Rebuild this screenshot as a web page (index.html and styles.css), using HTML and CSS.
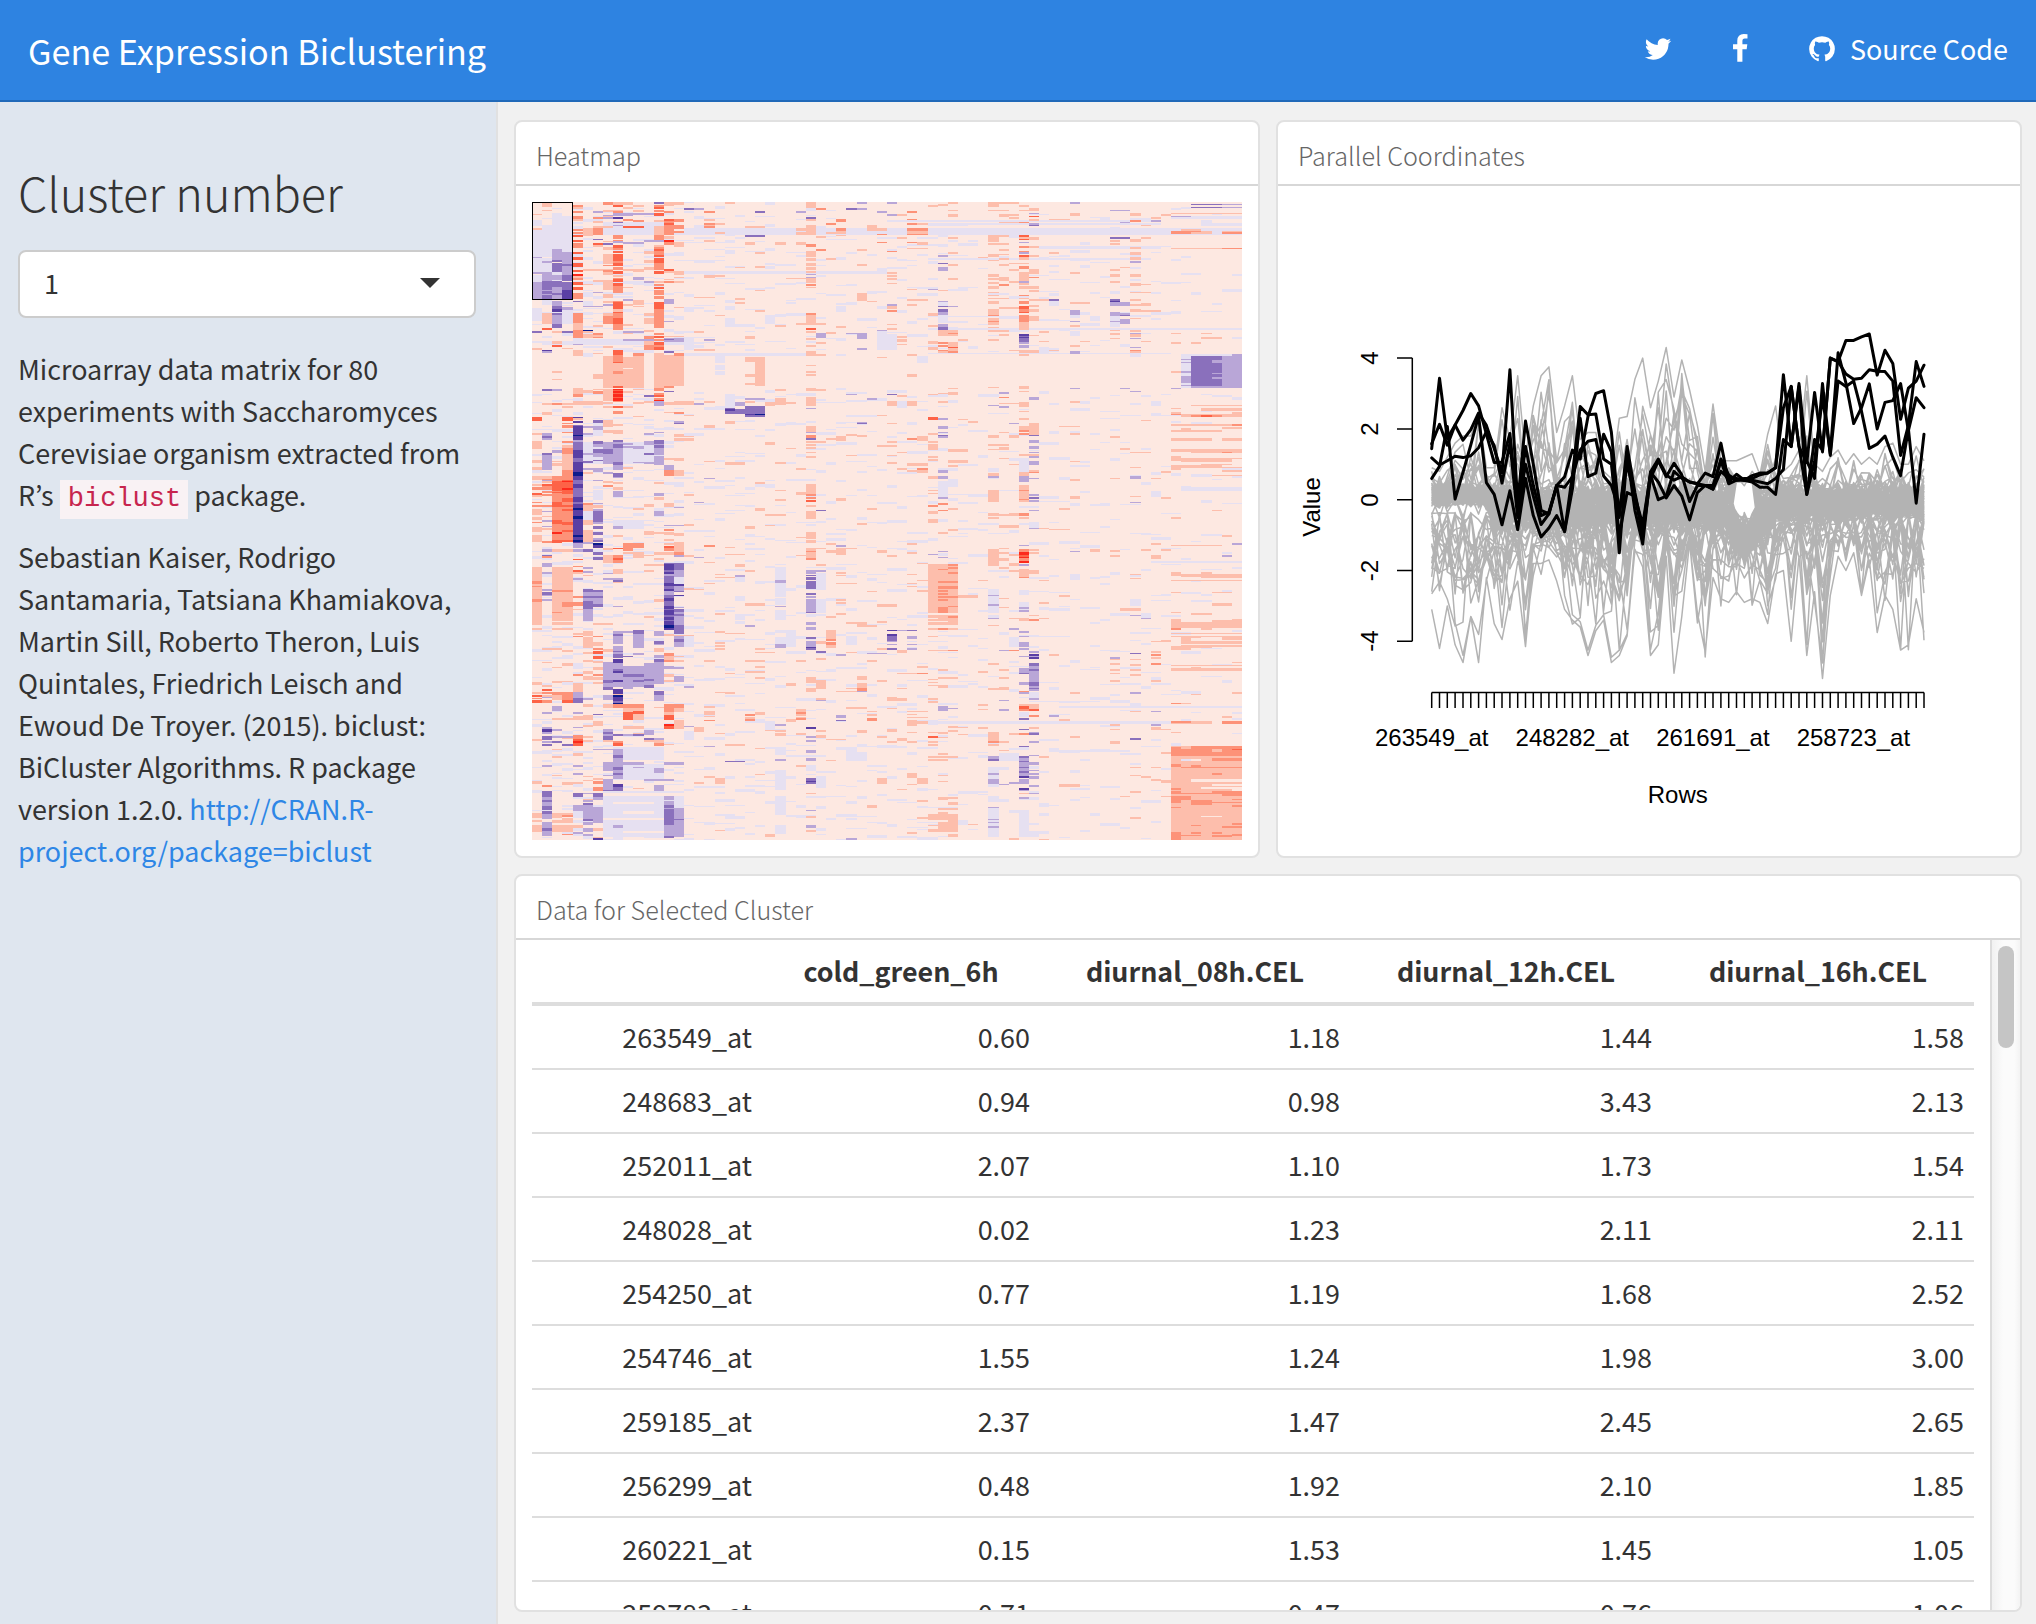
FILE: index.html
```html
<!DOCTYPE html>
<html lang="en">
<head>
<meta charset="utf-8">
<title>Gene Expression Biclustering</title>
<link rel="stylesheet" href="styles.css">
</head>
<body>
<header class="navbar">
  <div class="brand">Gene Expression Biclustering</div>
  <nav class="links">
    <a class="nav-link" aria-label="Twitter"><svg class="icon" viewBox="0 0 1792 1792"><path d="M1684 408q-67 98-162 167 1 14 1 42 0 130-38 259.5t-115.5 248.5-184.5 210.5-258 146-323 54.5q-271 0-496-145 35 4 78 4 225 0 401-138-105-2-188-64.5t-114-159.5q33 5 61 5 43 0 85-11-112-23-185.5-111.5t-73.5-205.5v-4q68 38 146 41-66-44-105-115t-39-154q0-88 44-163 121 149 294.5 238.5t371.5 99.5q-8-38-8-74 0-134 94.5-228.5t228.5-94.5q140 0 236 102 109-21 205-78-37 115-142 178 93-10 186-50z"/></svg></a>
    <a class="nav-link" aria-label="Facebook"><svg class="icon" viewBox="0 0 1792 1792"><path d="M1343 12v264h-157q-86 0-116 36t-30 108v189h293l-39 296h-254v759h-306v-759h-255v-296h255v-218q0-186 104-288.5t277-102.5q147 0 228 12z"/></svg></a>
    <a class="nav-link"><svg class="icon" viewBox="0 0 1792 1792"><path d="M896 128q209 0 385.5 103t279.5 279.5 103 385.5q0 251-146.5 451.5t-378.5 277.5q-27 5-40-7t-13-30q0-3 .5-76.5t.5-134.5q0-97-52-142 57-6 102.5-18t94-39 81-66.5 53-105 20.5-150.5q0-119-79-206 37-91-8-204-28-9-81 11t-92 44l-38 24q-93-26-192-26t-192 26q-16-11-42.5-27t-83.5-38.5-85-13.5q-45 113-8 204-79 87-79 206 0 85 20.5 150t52.5 105 80.5 67 94 39 102.5 18q-39 36-49 103-21 10-45 15t-57 5-65.5-21.5-55.5-62.5q-19-32-48.5-52t-49.5-24l-20-3q-21 0-29 4.5t-5 11.5 9 14 13 12l7 5q22 10 43.5 38t31.5 51l10 23q13 38 44 61.5t67 30 69.5 7 55.5-3.5l23-4q0 38 .5 88.5t.5 54.5q0 18-13 30t-40 7q-232-77-378.5-277.5t-146.5-451.5q0-209 103-385.5t279.5-279.5 385.5-103z"/></svg><span>Source Code</span></a>
  </nav>
</header>
<div class="page">
  <aside class="sidebar">
    <h3 class="sidebar-title">Cluster number</h3>
    <div class="select"><span>1</span><i class="caret"></i></div>
    <p class="text">Microarray data matrix for 80 experiments with Saccharomyces Cerevisiae organism extracted from R’s <code>biclust</code> package.</p>
    <p class="text">Sebastian Kaiser, Rodrigo Santamaria, Tatsiana Khamiakova, Martin Sill, Roberto Theron, Luis Quintales, Friedrich Leisch and Ewoud De Troyer. (2015). biclust: BiCluster Algorithms. R package version 1.2.0. <a class="cite">http://CRAN.R-<br>project.org/package=biclust</a></p>
  </aside>
  <main class="content">
    <div class="row-top">
      <section class="card">
        <div class="card-title">Heatmap</div>
        <div class="heat-body"><svg class="heatmap" id="heatmap" width="710" height="638" viewBox="0 0 710 638"></svg></div>
      </section>
      <section class="card">
        <div class="card-title">Parallel Coordinates</div>
        <svg class="parallel" width="742" height="670" viewBox="1278 186 742 670">
          <g id="profiles"></g>
          <g class="axis" id="axes"></g>
          <g class="labels">
            <text x="1431.7" y="745.5">263549_at</text><text x="1572.3" y="745.5">248282_at</text><text x="1712.9" y="745.5">261691_at</text><text x="1853.4" y="745.5">258723_at</text>
            <text x="1677.8" y="803">Rows</text>
            <text transform="translate(1320 507) rotate(-90)">Value</text>
            <text transform="translate(1377.5 358) rotate(-90)">4</text><text transform="translate(1377.5 429) rotate(-90)">2</text><text transform="translate(1377.5 500) rotate(-90)">0</text><text transform="translate(1377.5 570.5) rotate(-90)">-2</text><text transform="translate(1377.5 641) rotate(-90)">-4</text>
          </g>
        </svg>
      </section>
    </div>
    <section class="card card-data">
      <div class="card-title">Data for Selected Cluster</div>
      <div class="scroll">
        <div class="table-area">
        <table>
          <colgroup><col class="c0"><col class="c1"><col class="c2"><col class="c3"><col class="c4"></colgroup>
          <thead><tr><th></th><th>cold_green_6h</th><th>diurnal_08h.CEL</th><th>diurnal_12h.CEL</th><th>diurnal_16h.CEL</th></tr></thead>
          <tbody>
          <tr><td>263549_at</td><td>0.60</td><td>1.18</td><td>1.44</td><td>1.58</td></tr>
          <tr><td>248683_at</td><td>0.94</td><td>0.98</td><td>3.43</td><td>2.13</td></tr>
          <tr><td>252011_at</td><td>2.07</td><td>1.10</td><td>1.73</td><td>1.54</td></tr>
          <tr><td>248028_at</td><td>0.02</td><td>1.23</td><td>2.11</td><td>2.11</td></tr>
          <tr><td>254250_at</td><td>0.77</td><td>1.19</td><td>1.68</td><td>2.52</td></tr>
          <tr><td>254746_at</td><td>1.55</td><td>1.24</td><td>1.98</td><td>3.00</td></tr>
          <tr><td>259185_at</td><td>2.37</td><td>1.47</td><td>2.45</td><td>2.65</td></tr>
          <tr><td>256299_at</td><td>0.48</td><td>1.92</td><td>2.10</td><td>1.85</td></tr>
          <tr><td>260221_at</td><td>0.15</td><td>1.53</td><td>1.45</td><td>1.05</td></tr>
          <tr><td>259783_at</td><td>-0.71</td><td>0.47</td><td>0.76</td><td>1.06</td></tr>
          </tbody>
        </table>
        </div>
        <div class="track"><div class="thumb"></div></div>
      </div>
    </section>
  </main>
</div>
<script src="charts.js"></script>
</body>
</html>
```
FILE: styles.css
```css
* { box-sizing: border-box; }
body {
  margin: 0;
  width: 2036px;
  height: 1624px;
  overflow: hidden;
  display: flex;
  flex-direction: column;
  background: #f1f1f1;
  color: #333;
  font-family: "Noto Sans CJK JP", "Noto Sans CJK SC", "Noto Sans", sans-serif;
  font-size: 26.95px;
  line-height: 42px;
}
.navbar {
  flex: none;
  height: 102px;
  background: #2e83e1;
  border-bottom: 2px solid #2069b9;
  color: #fff;
  display: flex;
  justify-content: space-between;
  padding: 0 28px;
}
.brand { font-size: 34.15px; line-height: 100px; }
.links { display: flex; gap: 52px; height: 98px; align-items: center; }
.nav-link { display: flex; align-items: center; gap: 13px; }
.icon { width: 30px; height: 30px; fill: #fff; display: block; }
.page { flex: 1; min-height: 0; display: flex; }
.sidebar {
  flex: none;
  width: 498px;
  background: #dfe6ef;
  border-right: 2px solid #e1e1e1;
  padding: 60px 20px 0 18px;
}
.sidebar-title { margin: 0; font-weight: 300; font-size: 46.7px; line-height: 60px; }
.select {
  margin-top: 28px;
  width: 458px;
  height: 68px;
  background: #fff;
  border: 2px solid #ccc;
  border-radius: 8px;
  padding: 0 34px 2px 24px;
  display: flex;
  align-items: center;
  justify-content: space-between;
}
.caret { border: 10px solid transparent; border-top-color: #333; border-bottom: 0; }
.text { margin: 30px 0 0; }
.text + .text { margin-top: 20px; }
code {
  font-family: "Liberation Mono", monospace;
  font-size: 27px;
  line-height: 30px;
  color: #c7254e;
  background: #f9f2f4;
  padding: 4px 7px 5px 8px;
}
.cite { color: #2e86e6; }
.content { flex: 1; min-width: 0; padding: 18px 14px 12px 16px; display: flex; flex-direction: column; gap: 16px; }
.row-top { display: flex; gap: 16px; flex: none; height: 738px; }
.row-top .card { flex: 1; }
.card {
  background: #fff;
  border: 2px solid #e1e1e1;
  border-radius: 8px;
  overflow: hidden;
  display: flex;
  flex-direction: column;
}
.card-title {
  flex: none;
  height: 64px;
  border-bottom: 2px solid #d7d7d7;
  padding: 12px 20px 0;
  font-size: 25.15px;
  font-weight: 300;
  color: #666;
}
.heat-body { padding: 16px; }
.heatmap, .parallel { display: block; }
.axis { stroke: #000; stroke-width: 1.5; fill: none; }
.labels { font: 24px "Liberation Sans", Arial, sans-serif; text-anchor: middle; fill: #000; }
.card-data { flex: 1; min-height: 0; }
.scroll { flex: 1; min-height: 0; display: flex; overflow: hidden; }
.table-area { flex: 1; padding: 0 16px; }
table { width: 1442px; border-collapse: separate; border-spacing: 0; table-layout: fixed; }
.c0 { width: 230px; }
.c1 { width: 278px; }
.c2 { width: 310px; }
.c3 { width: 312px; }
.c4 { width: 312px; }
th { height: 66px; border-bottom: 4px solid #ddd; padding: 10px; font-size: 26.85px; font-weight: 700; text-align: center; }
td { height: 64px; border-top: 2px solid #ddd; padding: 10px; text-align: right; }
tbody tr:first-child td { height: 62px; border-top: 0; }
.track {
  flex: none;
  width: 30px;
  border-left: 2px solid #dcdcdc;
  background: linear-gradient(90deg, #f1f1f1, #fbfbfb 40%, #fbfbfb 80%, #f3f3f3);
  padding: 6px 6px 0;
}
.thumb { width: 16px; height: 102px; border-radius: 8px; background: #c5c5c5; }
```
FILE: charts.js
```js
const NS = 'http://www.w3.org/2000/svg';
function add(parent, name, attrs) {
  const el = document.createElementNS(NS, name);
  for (const k in attrs) el.setAttribute(k, attrs[k]);
  parent.appendChild(el);
}
let seed = 7;
function rnd() {
  seed = (seed * 1103515245 + 12345) % 2147483648;
  return seed / 2147483648;
}

/* Heatmap: 70 conditions wide, 638 pixel rows high.
   Levels: Z neutral, P S R X rising, L M D E N falling. */
const COLORS = { Z: '#fde8e1', P: '#fdbeac', S: '#fd9278', R: '#fd6347', X: '#fc2a1c',
  L: '#e6e0f1', M: '#b9a6d7', D: '#8a70bc', E: '#5a3fa4', N: '#0c1c8c' };
const grid = [];
for (let c = 0; c < 70; c++) grid.push(new Array(638).fill('Z'));
function fill(c0, c1, y0, y1, k) {
  for (let c = c0; c <= c1; c++)
    for (let y = Math.max(0, y0); y < Math.min(638, y1); y++) grid[c][y] = k;
}
for (let c = 0; c < 70; c++) {
  let y = 0;
  while (y < 638) {
    y += 3 + Math.floor(rnd() * (c < 15 ? 16 : c < 42 ? 34 : c > 62 ? 90 : 60));
    const h = 1 + Math.floor(rnd() * 2.6);
    const quiet = y > 152 && y < 186;
    if (!quiet) fill(c, Math.min(69, c + (rnd() < .35 ? 1 : 0)), y, y + h, rnd() < .86 ? 'L' : 'P');
    y += h;
  }
}
/* Each tile: origin offset, then "col[-col]:y0,y1K ..." with y in thirds of a pixel. */
const tiles = [
[-92, `
15-69:354,375L
7-12:336,375L
5-12:996,1062L
7-12:1014,1056L
15-26:729,738L
15-34:484,491L
4-14:687,705L
4-10:513,522L
0:330,348L 360,440L 441,444M 444,486L 486,492M 495,515L 515,567M 604,633L 663,669D 714,720P 921,933R 969,975P 993,1017P 1050,1060P 1072,1080P 1098,1110P
1:279,291P 300,303P 345,440L 444,486L 453,459M 486,516M 513,567D 540,543M 552,555M 570,585L 609,642P 654,660R 720,723E 723,729M 837,843D 879,885P 969,978M 978,984D 984,990M 1029,1035D 1035,1080M 1098,1113P 1107,1113S
2:309,321L 321,417L 417,450M 450,456D 459,486D 486,495L 495,510M 513,530D 530,567M 549,555D 573,588M 588,597D 597,606E 609,615D 615,642M 642,654D 663,669P 693,702P 705,711R 783,789P 807,810P 837,843M 879,885S 1020,1029M 1059,1068P 1098,1113S
3:318,426L 426,462M 462,468D 468,495M 495,513D 516,531D 531,540D 540,567E 576,582L 591,600M 600,640L 663,669D 693,705L 879,885P 888,894P 921,933R 939,942S 945,954S 966,969S 993,999S 1005,1080P 1014,1032S 1080,1113S
4:285,291S 291,297P 303,309S 318,327S 327,333P 357,363S 366,372S 375,381R 390,396R 400,414S 426,432R 441,450R 459,471R 480,486R 492,498X 498,504P 504,510S 516,526R 530,540R 549,567S 573,576D 609,640S 640,660P 660,684S 684,696L 702,705M 720,738P 834,852P 852,861S 864,873L 873,885P 921,924E 933,940E 945,948D 948,975E 975,978N 978,990E 990,996M 996,1020D 1020,1044E 1044,1056D 1056,1086E 1086,1098N 1098,1113E
5:291,300L 354,378P 384,390L 420,426L 477,483P 546,560L 573,588L 588,591M 660,663N 663,669P 672,684P 693,705L 732,741L 873,885P 948,954M 969,975M 1029,1035M 1053,1060D 1074,1080M
6:303,309M 321,327S 333,339P 354,375S 387,390D 399,405R 405,411P 477,483P 510,516P 516,525L 546,549M 588,591M 645,651P 669,675S 675,681P 681,684S 708,714L 729,732P 792,807P 843,852S 873,885P 930,939D 948,960M 960,975L 993,1002D 1002,1011M 1017,1030D 1030,1040M 1050,1053D 1074,1086M
7:276,285S 300,306P 315,318M 321,327M 348,354P 399,405D 411,420P 432,462P 465,468S 477,495P 480,486S 510,540P 552,564P 573,579P 582,588M 609,618P 618,642S 708,714P 738,834P 837,873P 876,882P 888,894P 930,951P 960,969P 996,1017M 1017,1032D 1032,1062M 1086,1092M
8:276,285P 285,291R 300,303P 303,309S 309,318M 321,327E 333,336P 336,339D 345,348M 375,387S 390,393S 393,399M 405,414R 414,420S 423,429R 432,453R 453,459S 459,468R 471,480S 483,492R 495,500P 504,507S 507,516R 519,528R 528,549S 573,576S 576,597R 597,606P 606,609R 609,624S 624,642R 642,660S 720,735R 735,756S 756,759R 759,792P 783,792S 792,828P 828,834R 837,873X 840,843R 849,852R 861,864R 873,876S 888,894R 903,912S 942,948P 960,969P 990,996D 996,1002M 1002,1014D 1014,1056M 1056,1065D 1065,1080M 1089,1101D 1101,1104M
9:276,285P 291,297P 309,318M 327,333S 348,354R 396,402M 465,471L 477,483P 492,498L 513,519L 567,573M 582,588P 642,648P 663,669M 687,693M 741,774P 777,834P 843,849P 888,894P 999,1005M 1008,1014M
10:285,291P 300,306P 309,315M 330,336S 348,354R 396,402M 402,411L 477,486P 501,510M 513,519L 570,585P 588,591P 663,669M 687,693M 729,738S 738,834P 837,840P 876,882P 1008,1017M 1056,1060M
11:309,315M 390,396M 423,432P 450,459P 471,480P 513,519M 609,618P 624,642P 660,665P 678,687S 687,693M 693,705P 705,720S 855,861D 873,880P 969,975M 993,1005M 1029,1035D 1056,1062M
12:276,282D 285,291S 291,297R 300,306S 309,318R 330,336P 348,375P 375,390S 390,396M 405,411P 411,417S 417,423R 423,435S 435,441R 444,459R 459,480S 483,492R 513,519P 522,528S 531,537R 540,555S 558,567S 576,597R 597,606S 606,654S 669,675S 678,684R 687,693S 696,705R 705,711S 711,720R 729,834P 834,843S 849,855S 855,861R 864,870S 870,873X 873,888M 966,969M 990,1014D 1002,1005M 1014,1035M 1038,1065M
13:276,288P 303,309S 327,333R 333,339S 339,345R 345,375S 378,387P 390,396X 396,405S 477,483R 513,519S 567,582M 633,636M 684,696M 687,690D 723,729D 735,756P 756,783P 780,828P 828,834S 843,846D 876,885P 906,910P 1065,1080M 1080,1098S
14:276,285P 327,336S 345,357S 363,369S 396,411P 483,495P 501,504P 513,519P 684,696M 729,738S 738,828P 879,885P 906,912S 933,939M 939,942D 984,993P 1080,1098P
15:294,300D 276,280L 552,558L 600,606L 663,669L 687,720L 879,885P 984,993P
16:294,300M 879,885M 591,597L 696,702L
17:303,309S 327,333P 339,345S 345,351P 348,354S 390,396P 495,504P 687,693M 873,879P 1104,1107M
18:339,345P 366,372P 495,500P 732,759L 765,780L 783,795L
19:276,282P 390,400L 420,432L 570,580L 588,600L 624,650L 852,894L 894,897D 897,903E 903,912D 933,942P
20:876,888M 897,912D 576,582P
21:348,354P 375,381D 396,405P 678,687P 741,756P 792,800P 819,825P 864,870M 873,879P 888,912D 912,915E 915,920D
22:303,309D 348,354P 375,381D 426,432P 600,606P 741,828P 864,870M 888,912D 912,915N 915,920D
23:276,285L 342,350L 468,477L 615,642L 876,888P
24:396,405P 645,651P 837,843P 864,885P
25:576,582L 570,573L 876,882P
26:303,309M 354,363P 366,375P 396,405P 1074,1080P
27:276,294P 294,303L 321,327D 327,333P 345,375P 402,411S 423,441P 444,453P 459,468P 471,480P 483,490P 492,495M 501,504M 504,520P 522,528S 531,534P 609,615S 615,645P 654,660R 663,669P 684,690P 705,711P 723,738P 765,768P 783,789P 792,798P 834,843P 861,888P 894,897M 948,966P 966,969M 975,984S 984,990D 993,999P 1002,1008P 1011,1017P 1026,1029P 1038,1044P
28:294,300S 378,384P 417,423S 639,645P 669,684M 732,738P 837,843P 993,999P
29:339,345S 366,372P 984,990P
30:327,336S 354,363S 363,372P 588,606L 978,993P 687,693L
31:294,300D 669,672M 852,855M 972,978P
32:276,282M 294,300M 417,423P 549,564P 669,687M 714,720M 939,942D 936,939M
33:345,363P 573,576P 864,870M
34:303,309M 354,363P 660,663M 741,744P`],
[278, `
8-10:120,146L
7-14:933,1071L
8-12:801,840L
8-12:852,900L
4-6:975,1030L
4-12:1014,1020Z
7-14:939,948Z
9-11:993,1002Z
9-12:1053,1059Z
8-11:966,972Z
0:12,18P 21,30S 39,45R 45,50P 66,69S 75,81S 87,105P 111,120P 126,129S 141,156P 165,186P 261,303P 303,312S 312,318P 318,321S 321,357P 357,366S 366,435P 444,450P 606,609P 636,642P 645,651R 654,657S 660,669R 903,911P 999,1014P 1020,1026P 1035,1056P
1:0,3M 3,9P 12,18R 18,30S 33,39S 42,48S 75,81S 93,96M 120,126M 138,141M 183,189S 207,216M 225,228D 228,234S 249,261M 276,282M 327,333M 336,345D 345,348M 357,363M 504,510P 546,549P 615,621P 627,633R 636,642S 645,651P 651,654M 660,669S 696,702M 741,747M 747,756E 756,762M 768,780D 783,789M 792,798D 855,861M 915,921S 933,951D 951,960M 960,966D 966,978M 978,990D 993,1002D 1002,1017M 1026,1044M 1044,1053D 1053,1068M
2:0,3S 3,33R 33,66S 36,39R 66,81R 81,120S 120,132R 132,156S 156,162X 162,180S 180,189R 207,216P 261,330P 330,336S 336,396P 396,399S 399,422P 426,435P 444,450P 504,510P 636,645S 645,660P 678,693M 747,753M 768,774M 783,789D 807,810P 828,834P 885,888P 933,998Z 999,1014P 1020,1029P 1035,1056P
3:0,3R 3,6X 6,24R 24,30X 30,42R 42,54S 54,66R 66,75S 75,81R 81,87S 87,93R 93,126S 126,135R 135,150S 150,156R 156,180S 180,186R 207,216P 261,330P 330,336S 336,366P 366,381S 381,422P 426,435P 444,450P 510,516P 636,660S 660,669R 768,774M 792,798D 999,1005P 1005,1011S 1014,1029P 1035,1056P 1062,1065S
4:0,12D 12,24E 24,51D 51,66E 66,72D 72,84E 84,90N 90,108E 108,117N 117,165E 165,171N 171,180E 180,186N 186,189E 189,204M 207,216M 237,240R 258,261S 270,276R 276,282P 294,300M 348,354S 366,378S 468,471S 549,567L 582,588S 609,636P 636,654M 654,669D 696,702M 708,714P 741,744M 765,777S 777,783R 783,789X 789,798R 819,828P 855,861M 879,885M 939,951D 975,993M 1056,1062M
5:69,75S 75,80P 81,93P 93,120L 120,135P 150,165P 165,186P 186,192M 207,216D 261,267M 273,279M 327,336D 336,348M 348,354D 354,363M 363,387D 387,423M 453,468P 471,504P 516,522P 540,546P 573,582P 588,600P 654,660M 705,711P 735,741P 768,774P 780,786P 888,891P 939,942M 960,966M 969,975D 975,1017M 1017,1023D 1026,1035M 1044,1056M 1062,1068M
6:0,3M 30,60L 69,72M 87,93M 93,126D 126,132M 138,147D 156,165D 174,180M 180,186D 189,195N 195,204E 216,225D 231,240D 330,336D 336,348M 348,354D 354,372M 372,381D 468,471S 486,498P 504,510S 513,522R 528,537R 543,549P 582,588S 591,600P 606,612P 702,705D 723,738P 807,810M 894,900P 903,912S 921,933S 939,951D 951,960M 981,1029M 1074,1080E
7:15,21S 204,210P 225,249P 279,282M 294,300M 546,600M 600,609D 609,621M 621,630D 645,660M 672,684P 747,756M 756,762D 762,768M 768,780D 780,786P 807,810M 846,873M 885,888M 897,933M 930,933D
8:6,12P 21,30P 33,51M 138,147M 165,171P 204,207R 225,234S 234,240R 240,249S 267,282P 294,300M 300,306D 378,381M 453,462M 462,468D 468,492M 498,512M 513,534D 516,522M 537,549E 549,567M 567,573D 573,579E 579,600M 600,606E 606,621M 627,642E 645,651N 651,663E 663,669D 669,672N 672,684S 762,768D 783,789S 789,798R 807,825M 825,834D 834,861M 861,870D 870,897M 879,885D 912,921E 921,933D 1035,1044M
9:189,213S 216,222P 453,460M 528,531D 558,582M 582,591D 591,627M 672,684S 684,696P 696,720R 738,747P 762,768M 846,855M
10:84,90P 189,204S 216,234P 450,462D 462,504M 519,525M 558,582M 582,591D 591,621M 600,606D 672,684S 684,693P 693,702R 702,720P 738,747P 759,765P 762,768D 846,855M 861,864M
11:75,81P 153,165P 225,228P 252,258P 270,276P 408,414P 549,597M 597,603D 603,615M 615,624D 750,765M 773,780D 897,903M
12:39,48M 93,108M 156,162P 216,225P 234,240P 252,258P 357,366P 453,468M 483,492D 492,495M 504,516P 525,534M 537,546D 546,612M 633,645D 645,663M 774,780M 789,798S 864,879M 897,903M 915,933M
13:69,81P 135,138M 147,153S 156,165P 177,183P 189,195P 198,204R 204,213S 216,225P 249,252D 252,270E 270,276D 276,282E 282,288M 288,309D 309,318E 318,327D 327,333E 333,345M 345,354D 354,363E 363,378D 378,387E 387,390D 390,405E 405,411D 411,420E 420,423D 423,435E 435,444N 444,450E 462,468P 519,528S 528,540P 540,546S 558,567M 582,590P 600,606P 672,684S 684,696S 696,705P 705,720R 732,738X 738,747R 846,855M 897,903M 948,960M 963,975M 975,981D 981,1035D 984,987M 1035,1070M 1068,1074D
14:81,84M 135,138M 186,216P 216,225S 225,231M 249,270D 270,291M 291,312L 312,318E 318,333M 333,336D 345,348E 381,384M 387,396D 396,402M 402,408D 408,435M 435,450D 450,462D 468,477M 477,486D 486,501M 528,531P 540,546P 561,567M 588,606M 672,684S 684,696P 720,747P 846,855M 984,1017M 1017,1020D 1020,1071M
15:42,48P 225,231P 468,500L 618,624M 738,741M 753,780L
16:66,69M 231,234M 741,756P 906,912P
17:195,201S 309,312P 540,546P 678,684P 693,705P 708,711P 720,723S 798,801M 888,894P
18:282,285P 399,405P 453,459P 486,492P 495,501P 504,510P 894,911P
19:578,582P 636,642P 843,846D 1044,1053L
20:285,303L 285,291M 843,846D 348,363L 405,420L
21:435,441M 540,546P 573,579P 702,708S 711,717P 717,723S
22:6,12P 84,93P 504,510P 540,546P 558,564P 573,579P 591,597P 696,705P
23:135,138P 723,750L
24:261,350L 300,309M 354,375L 378,381M 390,420L 471,492L 492,504M 732,738M 750,756P 759,768P 801,825L 837,843M 870,930L 948,1005L 1035,1062L
25:450,500L 513,522L
26:540,546P 687,696P 696,702S 702,708P 711,714P 714,720S 759,765P
27:12,42P 42,48S 51,57S 60,66R 75,81P 93,117P 156,177P 180,189P 204,213P 213,216S 216,234P 234,240S 270,282M 285,288D 291,300D 303,327D 339,345D 348,354M 357,396M 396,399D 402,411L 426,435M 441,450M 471,477D 483,501M 501,504E 504,510D 591,609P 624,636P 741,747E 768,774M 780,786M 810,819M 834,843M 855,873L 894,903D 903,906E 906,912D 939,942P 990,993M 1035,1044M
28:90,93D 270,276M 282,326L 357,399L 513,519D 534,540P 600,627P 654,660P 660,663M 750,756P 765,774P 888,923L
29:189,195P 450,477P 477,483S 486,495S 495,504P
30:195,201M 204,210P 216,225P 276,282P 357,363P 366,372P 399,405P 522,528M 705,714M 720,723D
31:468,495L 624,627P 801,843L 1074,1080M
32:588,600P 609,624P 624,633S 633,636M 750,759P 816,843L
33:84,90P 540,546P 693,697P 702,708P 714,723S 519,522M
34:504,510P 519,522M 600,606P 768,774P 894,911P`],
[-22, `
35-61:120,126L
39-61:129,135L
50-60:198,207L
39-60:234,240L
39-48:408,411L
39-69:444,450L
39-62:519,522L
64-69:921,933L
63-69:108,116L
66-69:129,138L
34:93,99M 144,153P 162,165S 186,189S 450,453M 459,510L
35:66,72M 102,108M 213,216S 276,282P 285,291P 294,300P 309,312P 372,378M 378,387P 390,396S 432,435P 444,450P 462,510L 642,645D 663,678P 729,732P 783,789P 825,828P 846,852P
36:102,108P 171,177P 468,474P 477,486P 492,495P 645,651P 663,684L 816,819P 864,870P
37:93,99S 117,120S 129,135S 144,153S 153,162P 162,165S 186,189S 204,207P 327,330P 357,363P 372,378P 522,528P 582,591P 663,678P 774,780S 870,876P
38:129,135P 144,153S 153,162P 162,165S 186,195P 204,207P 357,363P 528,548L 768,783P 864,870S 870,879P
39:75,81P 327,330M 435,441P 483,492P 501,510P 642,645P 711,720R 759,765P 783,789P 792,810P 828,834P 837,843P 888,897P 930,933P 939,942P 975,981S 993,1002P 1017,1029P
40:72,78P 225,231M 249,252D 261,273M 363,366M 366,378L 378,381D 387,396D 396,405M 405,430L 432,441M 441,450D 450,468P 486,492S 495,501S 510,513S 513,519P 639,642P 663,669P 714,720M 738,747M 756,759M 765,768D 768,774M 870,879M 888,897M 903,950L 951,957M 969,975S 990,993S 1056,1062P
41:66,72P 90,93P 102,111P 171,177P 216,222P 252,258P 294,300P 378,381M 450,468P 459,462S 486,513P 501,504R 513,519S 624,627P 636,645P 855,861P 903,920L 984,990P 1047,1053P
42:477,483P
43:723,729P
45:66,81P 90,93P 165,186P 189,195P 222,231P 240,243P 282,291P 294,300P 306,312P 318,327P 336,339P 345,348P 354,357P 363,372P 387,405P 405,408S 414,423P 423,426S 426,435P 441,444P 450,456P 477,483P 621,624P 675,678M 765,774P 792,798P 807,810P 864,876L 879,888P 888,894M 930,966P 999,1008P 1011,1017P 1107,1113P 1116,1140P
46:66,72P 90,93P 165,171P 189,195P 207,213P 222,225P 234,240P 252,258P 291,303P 312,318S 354,357P 381,387P 450,456P 462,468P 636,642M 651,654S 678,684M 756,759P 792,798P 801,810P 834,837P 1002,1008P 1116,1122P
47:66,72P 102,108P 111,117P 249,252P 267,273P 303,309P 381,387P 510,513P 729,732M 765,774P 852,855P
48:75,81P 90,93P 126,129S 165,171R 177,180R 186,189M 198,204S 213,216S 216,222M 225,231R 231,240P 249,252P 258,267S 276,303P 303,309M 309,315P 321,327P 345,348S 354,357P 363,372S 378,387R 387,396S 396,399R 405,426S 426,450P 462,477E 468,470D 474,486D 486,492M 495,504M 510,519P 522,528P 618,627P 633,636P 666,681P 693,696P 714,720P 738,756P 750,756S 759,765S 834,876L 876,888P 888,906M 915,966P 930,933S 957,960S 999,1008S 1011,1017P 1095,1098M 1107,1113S 1116,1134X 1125,1128S 1134,1140S
49:84,93P 99,102M 108,111R 117,123P 129,135M 135,138D 171,177P 198,204P 225,231P 267,282P 291,294S 321,327P 330,336P 357,363P 375,381P 387,396P 408,423P 465,468P 510,519P 651,660M 729,765P 765,768D 780,789M 798,807M 816,819M 828,834M 843,855M 870,876P 876,879S 894,897M 942,948M 951,957D 960,966M 990,993M 1026,1044L 1044,1047M
50:357,363P 453,459P 483,486P 501,522L
51:216,222P 357,363D 363,378L 510,513P
52:984,990P
53:66,72M 99,108P 276,282P 366,372P 390,405M 423,426M 435,441P 453,468L 495,501P 513,522M 624,627M 663,669P 738,741P 759,765P 843,846P 897,903P 948,957P 1113,1116M
54:396,405L 366,372P 483,486P
55:408,423L
57:90,93M 171,177D 180,186P 189,195P 267,273P 282,291P 303,309P 357,363D 363,366E 366,378M 396,408M 408,441L 423,426M 450,453P 459,465P 474,477P 768,774P 894,897P
58:90,93M 126,129M 171,177D 366,378M 399,405M 405,408D 417,432M 624,627M
59:99,108P 120,126S 177,186P 201,207P 216,225P 231,240P 243,249M 282,291P 309,318P 336,339P 357,363P 372,378P 387,396P 414,417P 459,462M 462,471P 474,477M 501,504M 510,513S 513,519P 633,636M 861,864P 888,897M 948,951P 966,969M
60:135,138P 171,177P 336,339P 372,378P 390,396P 483,486P 720,723P 1107,1113P
61:111,117P 120,126M 390,396P 663,678L 894,897P 939,950L 1089,1095P
62:102,108P 951,957P 1107,1113P
63-69:99,102P
63-67:204,207P
68-69:204,207S
65-67:72,75D 81,84D
68-69:72,75M 81,84M
63-64:108,111M
64-65:147,153P
63-65:153,162S
66:153,162P
68-69:153,156P 156,162S
65-66:156,162P
63:459,462P 486,492P 573,579P 624,627M 684,687P 696,702P 702,705S 828,834P 864,870P 1011,1017P
65:486,492P
66:459,462P
64-69:522,528L
64:528,624L 537,540M 546,549M 573,579M 588,609M 615,618M
65-67:528,618D
67:540,549M 579,582M 591,597M
68-69:528,624M
65-67:618,624M
69:522,528M
65-69:675,678P
66-69:684,693P
64-69:702,711P
65:705,711S
66:705,711R
67:705,711S
69:696,705P
63-68:732,738P
69:732,738S 1089,1095M
63-67:750,756P 855,864P 1095,1098P
63-66:774,783P
68-69:774,783P 861,864P 870,876P
63-69:807,816P
65-69:816,819P
68:816,819S 1065,1071P 1125,1131M
63:834,843P
64-68:834,846P
69:834,837P
66-68:852,855P
67-69:885,888P`],
[338, `
61-69:63,68L
52-69:498,504L
39-62:543,551L
51-58:630,636L
35:45,51P 270,273E 282,288E 288,303D 303,306M 312,315M 324,330D 471,474P 504,507P 567,576P 603,609P
36:270,273M 399,402P 444,447P
37:9,15P 36,42P 102,105P 129,132P 138,141P 270,273D 288,297M 303,306L 312,315M 324,330M 399,402P 513,516P 522,525P 531,534P 540,558P 603,609P 699,714P 876,882P
38:69,72P 120,123P 150,156P 378,384P 399,402S 513,516P 531,534P 543,552P 714,732P 780,786P 831,837P
39:42,45M 72,219P 225,234P 237,243P 246,255P 264,270P 288,291P 330,333P 417,420P 426,430P 435,438P 474,480P 483,489P 576,579P 588,594R 603,609P 612,618P 657,663P 822,840P 855,858P 867,876P
40:33,36M 51,54M 72,219P 87,90S 123,129S 138,147S 150,156S 159,165S 168,174S 177,183S 201,219S 225,243P 246,255P 264,270S 330,333P 387,393P 411,417P 435,444P 498,513M 576,582P 591,594P 639,645P 648,654P 657,663P 705,708P 723,726P 771,780P 804,810P 822,840P 846,876P
41:72,78S 78,219P 81,87S 96,102S 123,129S 138,147S 168,174S 198,201S 225,228P 228,234S 234,255P 264,270P 330,333S 411,417P 504,507M 570,576P 648,654P 771,777P 786,795P 804,810P 822,876P 882,891P
42:840,855L
43:168,174P
44:120,123P 393,399P 492,498P 561,567P
45:27,78P 147,234L 165,168M 192,198M 219,225Z 234,237M 369,375P 444,447P 576,603P 603,609S 612,618P 648,657M 657,663D 684,740L 699,705M 717,732M 771,785L 804,892L 801,804M 837,840M 846,849M 858,864M
46:24,27P 54,63P 81,87P 174,177P 330,333M 387,393P 411,417P 444,447P 480,483M 507,513M 603,609P 639,663L 732,735M
47:42,48P 69,78P 90,96P 234,237P 264,270M 291,320L 330,333S 579,585P 639,663L 726,732M 894,900P
48:15,18M 27,36S 36,45X 45,54R 51,54X 54,63S 63,69X 72,78M 87,111P 111,114S 150,165L 186,216L 201,207M 210,216M 234,243P 273,279M 288,291M 306,320M 324,330M 348,351M 384,399M 399,402D 426,435M 453,456S 456,462M 492,498P 498,507R 507,513S 516,530L 534,540D 567,570D 579,585S 618,621D 648,654D 654,663M 663,666D 666,708M 681,684D 693,699D 708,714E 717,732M 744,750E 750,753M 759,762P 771,777M 810,876L 876,891L
49:27,33P 90,102P 225,228P 237,243S 333,339M 342,348E 348,351M 351,357E 369,378D 378,411M 387,393D 411,426M 426,438D 438,453M 444,447D 456,474L 474,480M 492,507P 507,513R 525,531S 561,567P 576,579M 579,585D 603,609M 645,648M 666,675M 690,693M 699,705M 708,717M 735,741M 759,762M
50:120,123P 186,192P 234,237P 648,654P 789,801L
51:342,348P 525,531M
53:33,36M 588,594P 102,120L
57:30,36P 45,51P 351,357M 357,360P 369,375P 387,393P 399,402P 420,426P 552,558P 567,570P
59:102,105P 114,117P 177,198L 225,228M 339,342D 357,360P 372,378P 387,393P 402,408P 456,462M 513,516P 594,600D 681,684P 705,708P 753,759P 831,837P
60:27,33P 234,237M 219,234L 708,714P
61:9,15P 45,51P 333,339P 342,348S 351,357P 369,375S 420,426P 513,516M 552,558M 561,570P 681,684P 717,723P
62:27,33P 567,570P 768,771P
63:96,102P 102,108P 156,159P 216,219P
64-69:102,111P
66-69:105,114P
66:96,102P
63-69:120,123P
67-68:156,159P
65-66:219,225P
63-69:237,264P
64-68:237,240Z
64-66:240,247Z
63:264,270S
66:264,270P
63-69:279,282P 288,291P
64:291,303P
65:291,294P
68-69:291,300P
64-69:303,312P
65-69:312,315Z
64-69:315,321P
63-66:321,324P
63-64:318,330P
63-69:375,378P
63:384,393P 489,492S
64-69:384,393P
69:456,462P 366,369P
65:462,465P
64:489,492P
63-64:543,549S
65-66:543,549P
68-69:543,552S
63-66:549,552P
63:576,579P 609,618L
63-69:618,900P
65-69:618,627S
63:621,627S 672,681S 744,750S 753,762S 768,789S 801,804S 876,900S
63-69:627,648S
67:627,636P 699,705S 876,882S
69:627,630R 795,801S 849,855S 882,888S 777,780S
67-69:654,663S
63-69:648,654P
64:657,663L
65:657,663Z 675,681S 855,858S
64-69:681,684S
65-69:717,726Z
67-69:732,738Z
66-68:741,747Z
69:741,753Z
64-69:759,762S
67-69:753,759S
68-69:762,768S 858,864S
64:768,780S
65-66:780,795S
67-69:786,789S
66-67:828,831Z
64-65:885,888S
65:876,882S
67-68:885,891S`]];
for (const [origin, body] of tiles) {
  for (const line of body.trim().split('\n')) {
    const [cols, runs] = line.split(':');
    const [a, b] = cols.split('-').map(Number);
    for (const run of runs.trim().split(' ')) {
      const m = run.match(/^(\d+),(\d+)([A-Z])$/);
      if (m) fill(a, b === undefined ? a : b, Math.round(origin + m[1] / 3), Math.round(origin + m[2] / 3), m[3]);
    }
  }
}
const paths = {};
for (let c = 0; c < 70; c++) {
  const x0 = Math.round(c * 710 / 70), x1 = Math.round((c + 1) * 710 / 70);
  let y = 0;
  while (y < 638) {
    let e = y;
    while (e < 638 && grid[c][e] === grid[c][y]) e++;
    const k = grid[c][y];
    paths[k] = (paths[k] || '') + `M${x0} ${y}H${x1}V${e}H${x0}z`;
    y = e;
  }
}
const heat = document.getElementById('heatmap');
for (const k in paths) add(heat, 'path', { d: paths[k], fill: COLORS[k], 'shape-rendering': 'crispEdges' });
add(heat, 'rect', { x: .5, y: .5, width: 40, height: 97, fill: 'none', stroke: '#000' });

/* Parallel coordinates */
const X = i => 1431.7 + i * 7.815, Y = v => 499.7 - v * 35.4;
const hi = [.9,.8,1.2,1.6,1.8,1.8,2.4,.9,.9,2.6,1.7,3.5,1.2,2.65,3.5,3.75,1.9,2.65,3.5,1.7,1.9,1.9,.8,.6,2.3,2.35,3.4,4,2.6,3.35,4.3,2.9,3.95,3.1,2.1,.8,2.7,1.1,1.1,1.1,1.2,1.3,.7,1.85,2.65,.8,1,1.4,3.5,1,.8,1.2,1.4,1,1.3,1,1.2,1,1.5,1.6,1,1,1.5,1.1];
const lo = [-3.1,-4.2,-3,-4.1,-4.6,-3.3,-4.6,-2.2,-3.5,-3.95,-2.8,-2.3,-4.15,-1.8,-1.8,-1.7,-2.3,-3.1,-3.4,-3.6,-4.4,-3.7,-3.4,-4.6,-4.4,-3.85,-1.4,-1.9,-4.4,-4.1,-1.6,-4.9,-3.3,-1.2,-3.2,-4.3,-2.2,-2.8,-2.9,-2.6,-2.9,-2.8,-2.9,-3.5,-2.1,-2,-4,-1.6,-4.4,-2.6,-5.05,-2.7,-1.6,-2,-1.5,-2.7,-1.7,-3.75,-2.7,-3.1,-4.25,-4.1,-2.8,-3.75];
const prof = document.getElementById('profiles');
let gray = '';
function trace(f) {
  for (let i = 0; i < 64; i++) gray += (i ? 'L' : 'M') + X(i).toFixed(1) + ' ' + Y(f(i)).toFixed(1);
}
for (let k = 0; k < 90; k++) {
  trace(i => {
    if (i > 38 && i < 42) return k % 4 ? (i === 40 ? -.75 : -.35) - rnd() * 1.1 : .5 + rnd() * .1;
    const bot = i < 8 ? -.3 : i < 38 ? -1.1 : i < 44 ? -1.3 : -.7;
    const top = i < 8 ? .6 : i < 45 ? .65 : .55;
    const tail = rnd() < .07 ? (rnd() - .55) * .9 : 0;
    return bot + (top - bot) * (rnd() * .6 + rnd() * .4) + tail;
  });
}
for (let k = 0; k < 11; k++) trace(i => {
  if (k > 1 && i > 38 && i < 42) return .55;
  return k === 0 ? hi[i] : hi[i] * (.05 + .9 * Math.pow(rnd(), 1.3)) - .1;
});
trace(i => lo[i]);
trace(i => i > 17 && i < 25 ? lo[i] + .15 : lo[i] * (.35 + .45 * rnd()));
for (let k = 0; k < 17; k++) {
  const wide = k < 4 ? 1 : .62;
  trace(i => {
    const deep = i > 44 ? Math.pow(rnd(), 2) : Math.pow(rnd(), 1.3);
    return Math.max(-4.3, lo[i] * wide * deep) - .35;
  });
}
add(prof, 'path', { d: gray, fill: 'none', stroke: '#b3b3b3', 'stroke-width': 1.5, 'stroke-linejoin': 'round' });
const genes = [
  [.6,.94,2.07,.02,.77,1.55,2.37,.48,.15,-.71,.25,-.85,.6,-.45,-1.05,-.8,-.45,-.9,.3,2.3,.65,.75,1.85,1.35,-1.5,1.3,-.3,-1.25,.78,.5,.05,.4,.1,-.57,.2,.4,.3,.8,.6,.6,.55,.55,.5,.45,.6,.85,3.2,1.5,.15,1.7,1.4,4,3.9,4.5,4.5,4.6,4.68,3.52,4.22,3.85,2.27,3.15,3.35,3.8],
  [1.18,.98,1.1,1.23,1.19,1.24,1.47,1.92,1.53,.47,1.6,-.5,1,.1,-.7,-.4,.4,.35,.65,1.4,1.65,1.7,.67,.4,-.3,1,.1,-.7,.7,0,.1,.8,.6,.5,.45,.4,.4,1.1,.45,.55,.6,.6,.7,.75,.9,3.53,1.5,3.28,1.1,.6,3.28,1.25,3.35,3.2,3.35,2.5,1.45,1.57,1.8,1.2,.68,2,-.1,1.85],
  [1.44,3.43,1.73,2.11,1.68,1.98,2.45,2.1,1.45,.76,3.67,-.1,2.22,1,-.3,-.4,.4,.65,1.4,1.15,2.35,3,3.08,1.9,-.5,1.5,.2,-.9,.78,1.15,.7,.55,.65,.5,.45,.75,.65,1.6,.5,.72,.55,.68,.75,.75,.9,2.6,3.2,1.5,1.05,3.03,1.35,4,3.9,3.55,3.4,3.43,3.67,3.63,3.62,3.35,1.25,2.1,3.9,3.2],
  [1.58,2.13,1.54,2.11,2.52,3,2.65,1.85,1.05,1.06,1.87,-.3,1.5,.4,-.45,-.35,.4,-.9,.7,2.63,2.4,2.42,1.15,1,-1,.2,.1,-1,.6,1.1,.65,1.03,.7,-.05,.4,.4,.3,1.15,.7,.55,.55,.5,.35,.35,.15,1.7,1.5,3.2,.15,1.1,2.9,1.3,4.15,3.3,2.15,2.6,3.27,2,2.75,2.8,3.28,1.95,2.88,2.6]];
for (const g of genes)
  add(prof, 'polyline', { points: g.map((v, i) => X(i).toFixed(1) + ',' + Y(v).toFixed(1)).join(' '), fill: 'none', stroke: '#000', 'stroke-width': 3, 'stroke-linejoin': 'round', 'stroke-linecap': 'round' });
let ax = 'M1412.3 357.9V641.2M1431.7 692.5H1924';
for (const v of [4, 2, 0, -2, -4]) ax += `M1412.3 ${Y(v).toFixed(1)}H1397`;
for (let i = 0; i < 64; i++) ax += `M${X(i).toFixed(1)} 692.5V708`;
add(document.getElementById('axes'), 'path', { d: ax });
```
